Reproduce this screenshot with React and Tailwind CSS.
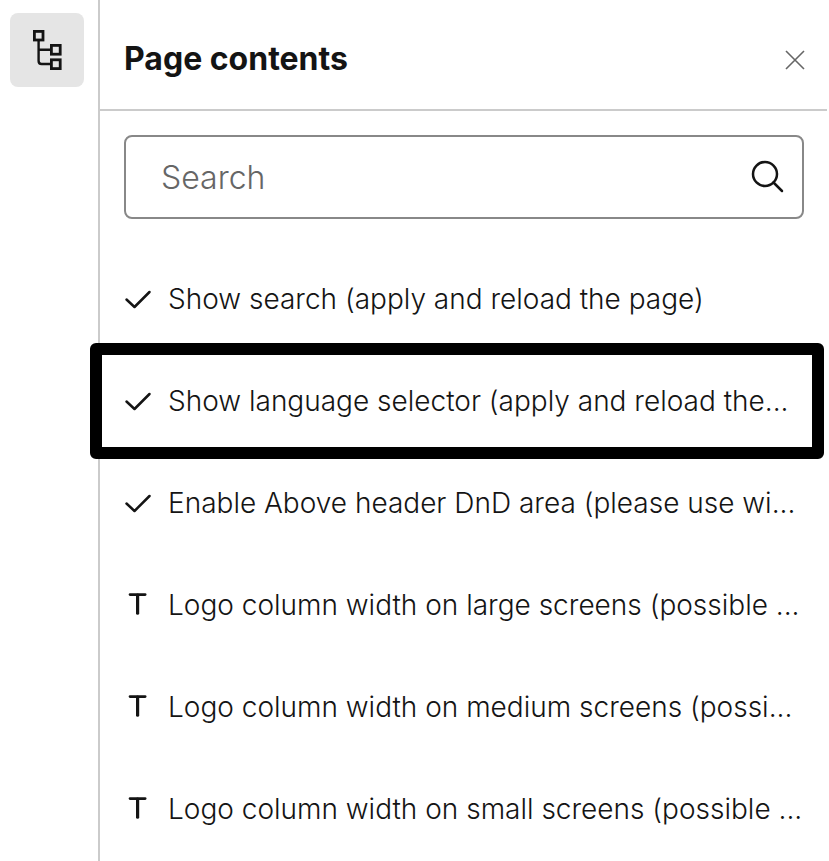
import React from "react";

const CheckIcon = () => (
  <svg className="w-7 h-7 shrink-0" viewBox="0 0 28 28" fill="none" stroke="currentColor" strokeWidth="2.5" strokeLinecap="round" strokeLinejoin="round">
    <path d="M2.5 14.5L10.5 22L25.5 7" />
  </svg>
);

const TextIcon = () => (
  <svg className="w-7 h-7 shrink-0" viewBox="0 0 28 28" fill="none" stroke="currentColor" strokeLinecap="round">
    <path strokeWidth="2.6" d="M6 3.6H21.2" />
    <path strokeWidth="3.2" d="M13.6 4V22.2" />
  </svg>
);

const TreeIcon = () => (
  <svg className="w-11 h-11" viewBox="0 0 44 44" fill="none" stroke="currentColor" strokeWidth="2.8">
    <path strokeWidth="2.4" d="M13.6 13V33Q13.6 36 16.6 36H25M13.6 21.7H25" />
    <rect x="9.4" y="3.4" width="8.6" height="8.6" />
    <rect x="26.4" y="17.4" width="8.8" height="8.8" />
    <rect x="26.4" y="31.8" width="8.8" height="8.8" />
  </svg>
);

const items = [
  { type: "check", label: "Show search (apply and reload the page)" },
  { type: "check", label: "Show language selector (apply and reload the...", selected: true },
  { type: "check", label: "Enable Above header DnD area (please use wi..." },
  { type: "text", label: "Logo column width on large screens (possible ..." },
  { type: "text", label: "Logo column width on medium screens (possi..." },
  { type: "text", label: "Logo column width on small screens (possible ..." },
];

const App = () => {
  return (
    <div className="flex min-h-screen pr-0.5 bg-white text-[#141414] font-['Inter',sans-serif] overflow-hidden">
      <nav className="w-[98px] shrink-0 pl-2.5 pt-[13px]">
        <button
          type="button"
          aria-label="Page contents"
          className="flex items-center justify-center w-[74px] h-[74px] rounded-lg bg-[#e5e5e5]"
        >
          <TreeIcon />
        </button>
      </nav>

      <main className="flex-1 min-w-0 border-l-2 border-[#cbcbcb]">
        <header className="flex items-center justify-between h-[111px] pl-6 pr-5 pt-2 border-b-2 border-[#cbcbcb]">
          <h1 className="text-[32px] leading-10 font-bold">Page contents</h1>
          <button type="button" aria-label="Close" className="text-[#666666]">
            <svg className="w-6 h-6" viewBox="0 0 24 24" fill="none" stroke="currentColor" strokeWidth="1.6">
              <path d="M3 4L21 22M21 4L3 22" />
            </svg>
          </button>
        </header>

        <div className="pl-6 pr-[23px] pt-6">
          <label className="flex items-center h-[84px] pl-[35px] pr-4 border-2 border-[#888888] rounded-lg">
            <input
              type="text"
              placeholder="Search"
              aria-label="Search"
              className="flex-1 min-w-0 pt-0.5 text-[32px] leading-10 font-light outline-none placeholder:text-[#666666]"
            />
            <svg className="w-9 h-9 shrink-0" viewBox="0 0 36 36" fill="none" stroke="currentColor" strokeWidth="2.5" strokeLinecap="round">
              <circle cx="15" cy="15" r="12" />
              <path d="M23.5 23.5L32 32" />
            </svg>
          </label>
        </div>

        <ul className="pt-[29px]">
          {items.map((item) => (
            <li key={item.label} className="relative">
              <a href="#" className="flex items-center gap-4 h-[102px] pl-6 text-[28px] leading-9 font-light whitespace-nowrap">
                {item.type === "check" ? <CheckIcon /> : <TextIcon />}
                {item.label}
              </a>
              {item.selected && (
                <div className="absolute -inset-y-[7px] -left-2.5 right-[3px] border-12 border-black rounded-md pointer-events-none" />
              )}
            </li>
          ))}
        </ul>
      </main>
    </div>
  );
};

export default App;
